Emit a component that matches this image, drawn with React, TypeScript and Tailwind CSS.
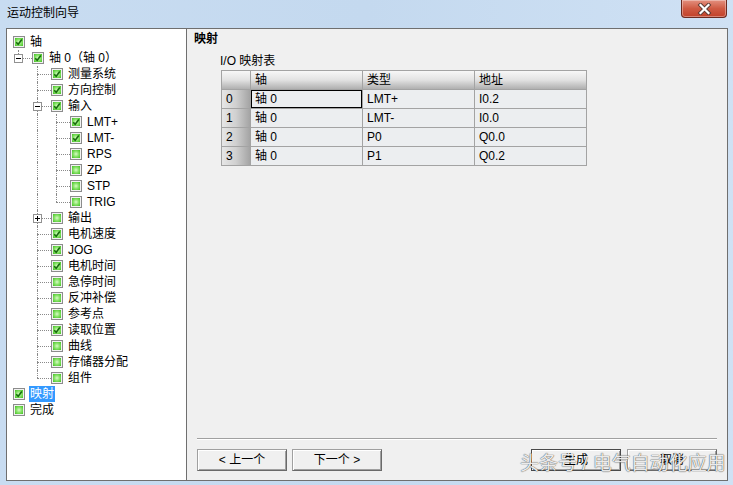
import React from 'react'

type Item = {
  label: string
  level: number
  checked: boolean
  exp?: '-' | '+'
  last?: boolean
  selected?: boolean
}

const ITEMS: Item[] = [
  { label: '轴', level: 0, checked: true },
  { label: '轴 0（轴 0）', level: 1, checked: true, exp: '-', last: true },
  { label: '测量系统', level: 2, checked: true },
  { label: '方向控制', level: 2, checked: true },
  { label: '输入', level: 2, checked: true, exp: '-' },
  { label: 'LMT+', level: 3, checked: true },
  { label: 'LMT-', level: 3, checked: true },
  { label: 'RPS', level: 3, checked: false },
  { label: 'ZP', level: 3, checked: false },
  { label: 'STP', level: 3, checked: false },
  { label: 'TRIG', level: 3, checked: false, last: true },
  { label: '输出', level: 2, checked: false, exp: '+' },
  { label: '电机速度', level: 2, checked: true },
  { label: 'JOG', level: 2, checked: true },
  { label: '电机时间', level: 2, checked: true },
  { label: '急停时间', level: 2, checked: false },
  { label: '反冲补偿', level: 2, checked: false },
  { label: '参考点', level: 2, checked: false },
  { label: '读取位置', level: 2, checked: true },
  { label: '曲线', level: 2, checked: false },
  { label: '存储器分配', level: 2, checked: false },
  { label: '组件', level: 2, checked: false, last: true },
  { label: '映射', level: 0, checked: true, selected: true },
  { label: '完成', level: 0, checked: false },
]

type Col = { v: 'none' | 'full' | 'half'; h: boolean; exp?: '-' | '+' }

// work out the dotted guide lines for every row
function buildRows() {
  const lastAt: boolean[] = []
  return ITEMS.map(it => {
    lastAt[it.level] = !!it.last
    const cols: Col[] = []
    for (let c = 0; c < it.level; c++) {
      if (c === it.level - 1) {
        cols.push({ v: it.last ? 'half' : 'full', h: true, exp: it.exp })
      } else {
        cols.push({ v: lastAt[c + 1] ? 'none' : 'full', h: false })
      }
    }
    return { ...it, cols }
  })
}

const ROWS = buildRows()

const TABLE = [
  { n: '0', axis: '轴 0', type: 'LMT+', addr: 'I0.2' },
  { n: '1', axis: '轴 0', type: 'LMT-', addr: 'I0.0' },
  { n: '2', axis: '轴 0', type: 'P0', addr: 'Q0.0' },
  { n: '3', axis: '轴 0', type: 'P1', addr: 'Q0.2' },
]

function Check({ checked }: { checked: boolean }) {
  return (
    <div className="ml-[5px] w-[12px] h-[12px] shrink-0 border border-[#8c8c8c] bg-[#f2f2f2] p-px">
      <div className="relative w-full h-full bg-[radial-gradient(circle,#d8fbc6_0%,#8be46c_45%,#3fbf1f_100%)]">
        {checked && (
          <svg viewBox="0 0 8 8" className="absolute inset-0 w-full h-full">
            <path d="M1.2 4.2 L3.2 6.2 L6.8 1.6" fill="none" stroke="#176b0c" strokeWidth="1.6" />
          </svg>
        )}
      </div>
    </div>
  )
}

function Expander({ sign }: { sign: '-' | '+' }) {
  return (
    <div className="absolute left-[6px] top-[4px] w-[9px] h-[9px] border border-[#919191] bg-white">
      <span className="absolute left-[1px] top-[3px] w-[5px] h-px bg-black" />
      {sign === '+' && <span className="absolute left-[3px] top-[1px] w-px h-[5px] bg-black" />}
    </div>
  )
}

function TreeRow({ row }: { row: (typeof ROWS)[number] }) {
  return (
    <div className="flex h-[16px] items-center">
      {row.cols.map((c, i) => (
        <div key={i} className="relative h-full w-[19px] shrink-0">
          {c.v === 'full' && (
            <span className="absolute left-[10px] top-0 h-full border-l border-dotted border-[#8a8a8a]" />
          )}
          {c.v === 'half' && (
            <span className="absolute left-[10px] top-0 h-[8px] border-l border-dotted border-[#8a8a8a]" />
          )}
          {c.h && (
            <span className="absolute left-[10px] top-[8px] w-[14px] border-t border-dotted border-[#8a8a8a]" />
          )}
          {c.exp && <Expander sign={c.exp} />}
        </div>
      ))}
      <Check checked={row.checked} />
      <span
        className={
          row.selected
            ? 'ml-[4px] px-px h-[16px] leading-[16px] bg-[#3399ff] text-white'
            : 'ml-[4px] px-px h-[16px] leading-[16px] text-black'
        }
      >
        {row.label}
      </span>
    </div>
  )
}

function Btn({ label, def, className }: { label: string; def?: boolean; className?: string }) {
  return (
    <button
      className={
        'w-[90px] h-[22px] text-[12px] leading-[20px] text-black bg-[#f0f0f0] border shadow-[inset_1px_1px_0_#ffffff,inset_-1px_-1px_0_#a0a0a0] ' +
        (def ? 'border-[#4a4a4a] ' : 'border-[#a0a0a0] border-r-[#6a6a6a] border-b-[#6a6a6a] ') +
        (className ?? '')
      }
    >
      {label}
    </button>
  )
}

export default function App() {
  return (
    <div className="relative w-[733px] h-[485px] overflow-hidden flex flex-col bg-linear-to-r from-[#c8dcf1] via-[#c4d9ef] to-[#cfe1f4] font-['Liberation_Sans','Noto_Sans_CJK_SC',sans-serif] text-[12px]">
      {/* title bar */}
      <div className="relative h-[28px] shrink-0 flex items-start pl-[7px] pt-[4px]">
        <span className="text-[12px] leading-[18px] text-black">运动控制向导</span>
        <div className="absolute right-[6px] top-0 w-[46px] h-[18px] rounded-b-[4px] border border-t-0 border-[#6b2a20] bg-linear-to-b from-[#e3907f] via-[#cf5a43] to-[#c24129] shadow-[inset_0_0_0_1px_rgba(255,255,255,0.35)] flex items-center justify-center">
          <svg viewBox="0 0 14 12" className="w-[15px] h-[12px]">
            <path d="M3 2 L11 10 M11 2 L3 10" stroke="#5a3a34" strokeWidth="4" strokeLinecap="square" />
            <path d="M3 2 L11 10 M11 2 L3 10" stroke="#ffffff" strokeWidth="2.2" strokeLinecap="square" />
          </svg>
        </div>
      </div>

      {/* client area */}
      <div className="flex-1 flex ml-[6px] mr-[5px] mb-[4px] min-h-0">
        {/* tree */}
        <div className="w-[181px] shrink-0 bg-white border border-[#6f6f6f] pt-[5px] pl-px">
          {ROWS.map((r, i) => (
            <TreeRow key={i} row={r} />
          ))}
        </div>

        {/* page */}
        <div className="flex-1 flex flex-col bg-[#f0f0f0] border-y border-r border-[#6f6f6f]">
          <div className="pl-[7px] pt-[2px] font-bold leading-[16px] text-black">映射</div>
          <div className="pl-[33px] mt-[6px] leading-[16px] text-black">I/O 映射表</div>

          <div className="ml-[34px] mt-px w-[366px] grid grid-cols-[28px_111px_111px_111px] gap-px bg-[#a3a3a3] border border-[#a3a3a3] text-black">
            <div className="h-[18px] bg-linear-to-b from-[#f7f7f7] via-[#e2e2e2] to-[#b0b0b0]" />
            {['轴', '类型', '地址'].map(h => (
              <div key={h} className="h-[18px] pl-[4px] leading-[18px] bg-linear-to-b from-[#f7f7f7] via-[#e2e2e2] to-[#b0b0b0]">
                {h}
              </div>
            ))}
            {TABLE.map((r, i) => (
              <React.Fragment key={r.n}>
                <div className="h-[18px] pl-[4px] leading-[18px] bg-linear-to-r from-[#e6e6e6] via-[#d0d0d0] to-[#a4a4a4]">
                  {r.n}
                </div>
                {i === 0 ? (
                  <div className="h-[18px] pl-[3px] leading-[16px] bg-[#eceef0] border border-black">{r.axis}</div>
                ) : (
                  <div className="h-[18px] pl-[4px] leading-[18px] bg-[#eceef0]">{r.axis}</div>
                )}
                <div className="h-[18px] pl-[4px] leading-[18px] bg-[#eceef0]">{r.type}</div>
                <div className="h-[18px] pl-[4px] leading-[18px] bg-[#eceef0]">{r.addr}</div>
              </React.Fragment>
            ))}
          </div>

          <div className="mt-auto mx-[10px] h-[2px] border-t border-[#a0a0a0] border-b border-b-white" />
          <div className="flex items-center px-[10px] mt-[9px] mb-[9px]">
            <Btn label="< 上一个" />
            <Btn label="下一个 >" className="ml-[5px]" />
            <Btn label="生成" def className="ml-auto" />
            <Btn label="取消" className="ml-[6px]" />
          </div>
        </div>
      </div>

      {/* watermark */}
      <div className="absolute left-[520px] top-[452px] text-[19px] leading-[24px] text-white/90 [text-shadow:0_0_1px_rgba(0,0,0,0.7),0_0_1px_rgba(0,0,0,0.5)]">
        头条号 / 电气自动化应用
      </div>
    </div>
  )
}
